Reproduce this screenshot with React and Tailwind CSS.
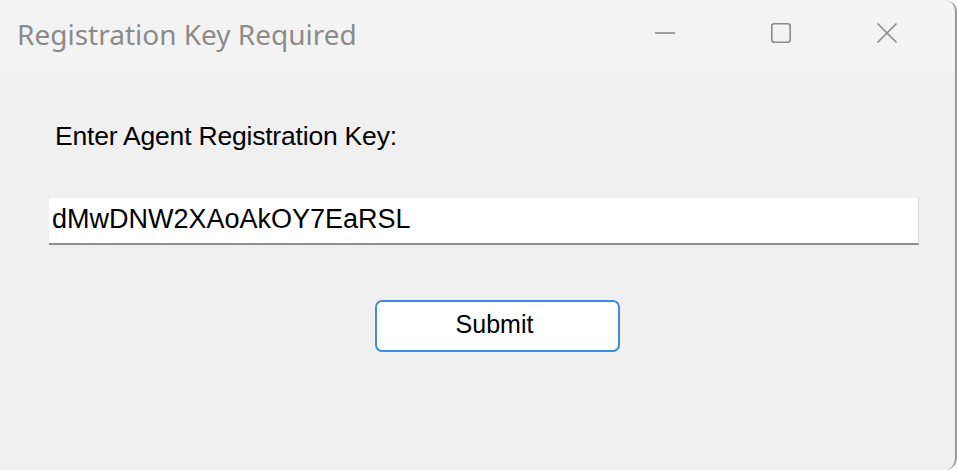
import React, { useState } from "react";

const TitleBar = () => {
  return (
    <div className="flex h-[72px] items-center bg-[#f3f3f3]">
      <div
        className="flex-1 pl-[17px] pb-[4px] text-[28px] text-[#8b8b8b]"
        style={{ fontFamily: '"Noto Sans", "Open Sans", sans-serif' }}
      >
        Registration Key Required
      </div>
      <div className="flex h-full items-center pb-[6px]">
        <button className="flex h-full w-[116px] items-center justify-center">
          <svg width="22" height="22" viewBox="0 0 22 22">
            <line x1="1" y1="11" x2="21" y2="11" stroke="#8a8a8a" strokeWidth="1.6" />
          </svg>
        </button>
        <button className="flex h-full w-[116px] items-center justify-center">
          <svg width="22" height="22" viewBox="0 0 22 22">
            <rect x="1.8" y="1.8" width="18.4" height="18.4" rx="2.5" fill="none" stroke="#8a8a8a" strokeWidth="1.6" />
          </svg>
        </button>
        <button className="flex h-full w-[116px] items-center justify-center pr-[20px]">
          <svg width="22" height="22" viewBox="0 0 22 22">
            <path d="M1.5 1.5 L20.5 20.5 M20.5 1.5 L1.5 20.5" stroke="#8a8a8a" strokeWidth="1.6" fill="none" />
          </svg>
        </button>
      </div>
    </div>
  );
};

export default function App() {
  const [key, setKey] = useState("dMwDNW2XAoAkOY7EaRSL");

  return (
    <div className="h-[470px] w-[957px] bg-white">
      <div className="flex h-full w-full flex-col overflow-hidden rounded-r-[12px] border-r-2 border-[#9a9a9a] bg-[#f0f0f0]">
        <TitleBar />
        <div
          className="flex flex-1 flex-col pl-[49px] pt-[47px] text-[#000]"
          style={{ fontFamily: '"Liberation Sans", Arial, sans-serif' }}
        >
          <label className="pl-[6px] text-[26.5px] leading-[34px] tracking-[-0.2px]">
            Enter Agent Registration Key:
          </label>
          <input
            value={key}
            onChange={(e) => setKey(e.target.value)}
            className="mt-[45px] h-[47px] w-[870px] border-b-2 border-r border-b-[#8c8c8c] border-r-[#d9d9d9] bg-white px-[3px] pb-[2px] text-[27px] outline-none"
          />
          <div className="mt-[55px] flex">
            <button className="ml-[326px] h-[52px] w-[245px] rounded-[7px] border-2 border-[#3b8ee0] bg-white pb-[2px] pr-[6px] text-[25px]">
              Submit
            </button>
          </div>
        </div>
      </div>
    </div>
  );
}
